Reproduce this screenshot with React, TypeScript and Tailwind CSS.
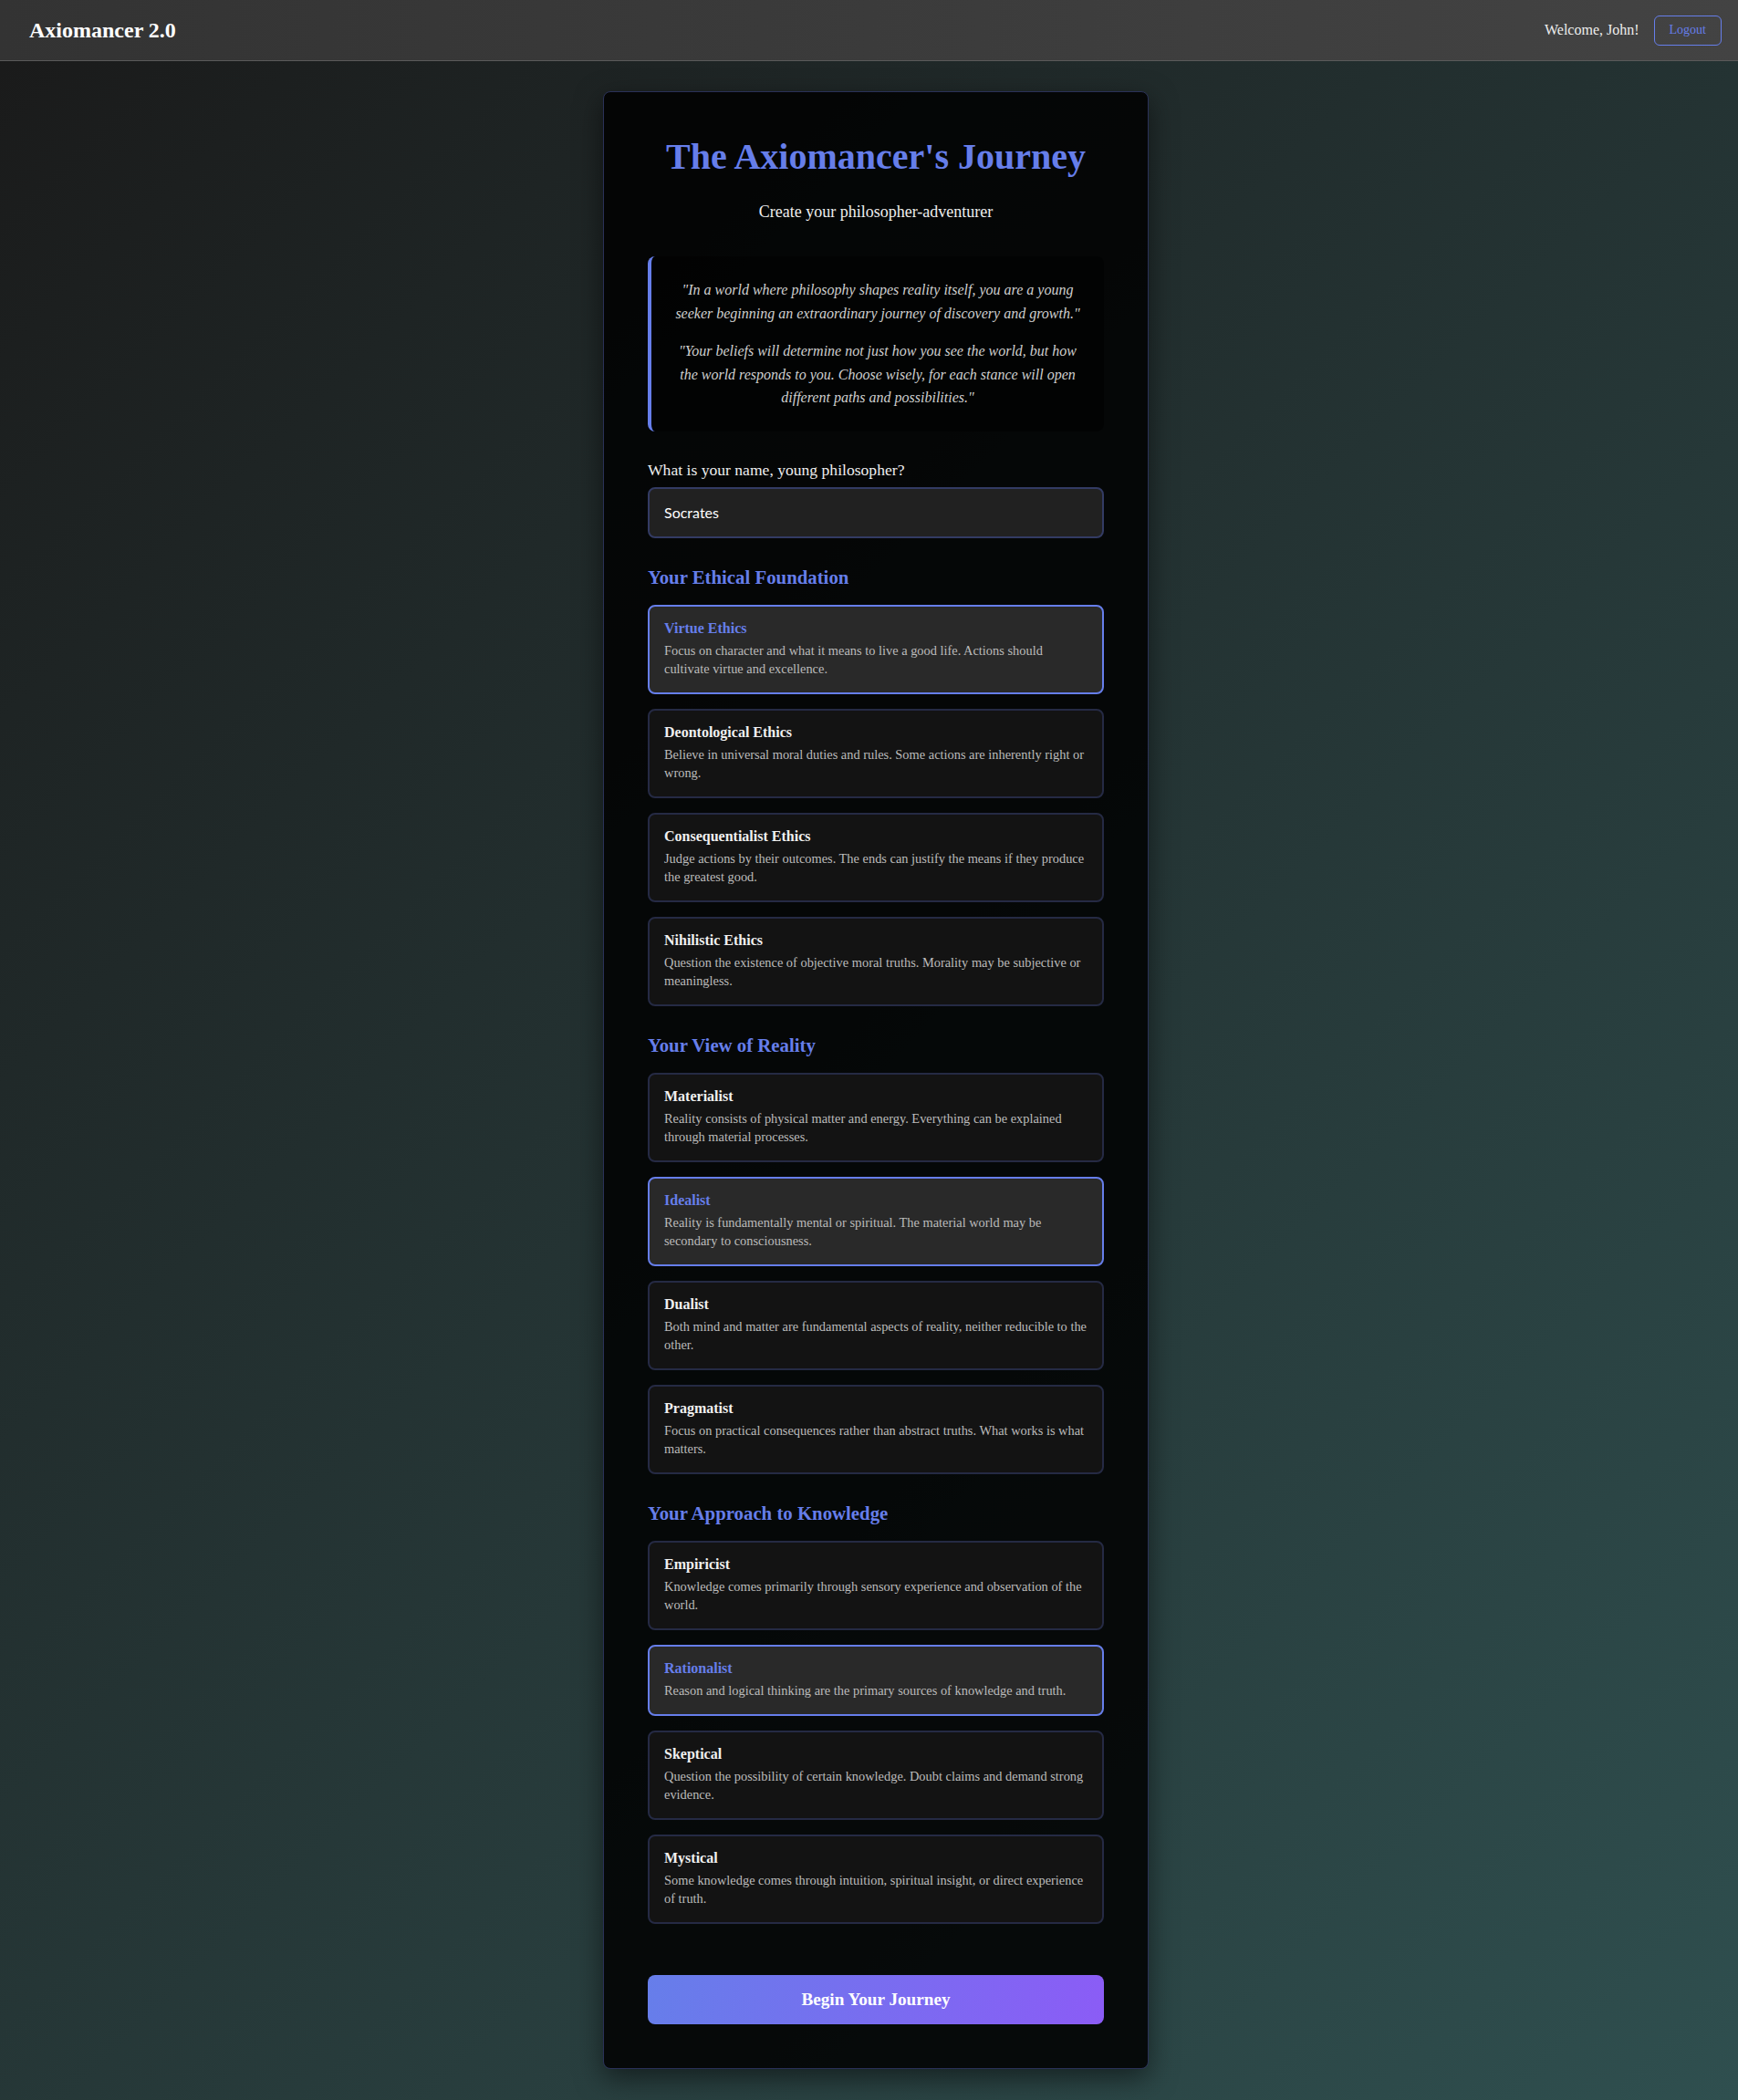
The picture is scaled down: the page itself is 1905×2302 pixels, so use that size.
import React, { useState } from 'react';

interface Stance {
    id: string;
    title: string;
    description: string;
}

const ethics: Stance[] = [
    { id: 'virtue', title: 'Virtue Ethics', description: 'Focus on character and what it means to live a good life. Actions should cultivate virtue and excellence.' },
    { id: 'deontological', title: 'Deontological Ethics', description: 'Believe in universal moral duties and rules. Some actions are inherently right or wrong.' },
    { id: 'consequentialist', title: 'Consequentialist Ethics', description: 'Judge actions by their outcomes. The ends can justify the means if they produce the greatest good.' },
    { id: 'nihilistic', title: 'Nihilistic Ethics', description: 'Question the existence of objective moral truths. Morality may be subjective or meaningless.' },
];

const reality: Stance[] = [
    { id: 'materialist', title: 'Materialist', description: 'Reality consists of physical matter and energy. Everything can be explained through material processes.' },
    { id: 'idealist', title: 'Idealist', description: 'Reality is fundamentally mental or spiritual. The material world may be secondary to consciousness.' },
    { id: 'dualist', title: 'Dualist', description: 'Both mind and matter are fundamental aspects of reality, neither reducible to the other.' },
    { id: 'pragmatist', title: 'Pragmatist', description: 'Focus on practical consequences rather than abstract truths. What works is what matters.' },
];

const knowledge: Stance[] = [
    { id: 'empiricist', title: 'Empiricist', description: 'Knowledge comes primarily through sensory experience and observation of the world.' },
    { id: 'rationalist', title: 'Rationalist', description: 'Reason and logical thinking are the primary sources of knowledge and truth.' },
    { id: 'skeptical', title: 'Skeptical', description: 'Question the possibility of certain knowledge. Doubt claims and demand strong evidence.' },
    { id: 'mystical', title: 'Mystical', description: 'Some knowledge comes through intuition, spiritual insight, or direct experience of truth.' },
];

const StanceSection: React.FC<{
    heading: string;
    options: Stance[];
    selected: string;
    onSelect: (id: string) => void;
}> = ({ heading, options, selected, onSelect }) => (
    <section className="mt-[31px]">
        <h3 className="text-[20.8px] leading-6 font-bold text-[#667eea] mb-[18px]">{heading}</h3>
        <div className="flex flex-col gap-4">
            {options.map((opt) => {
                const active = selected === opt.id;
                return (
                    <div
                        key={opt.id}
                        onClick={() => onSelect(opt.id)}
                        className={
                            active
                                ? 'cursor-pointer rounded-lg border-2 border-[#667eea] bg-[#292929] px-4 pt-[15px] pb-4'
                                : 'cursor-pointer rounded-lg border-2 border-[#252a44] bg-[#131313] px-4 pt-[15px] pb-4'
                        }
                    >
                        <div className={active ? 'text-base leading-[18px] font-bold text-[#667eea] mb-[5px]' : 'text-base leading-[18px] font-bold text-[#f0f0f0] mb-[5px]'}>
                            {opt.title}
                        </div>
                        <p className="text-[14.4px] leading-5 text-[#bbbbbb]">{opt.description}</p>
                    </div>
                );
            })}
        </div>
    </section>
);

export default function App() {
    const [name, setName] = useState('Socrates');
    const [ethic, setEthic] = useState('virtue');
    const [view, setView] = useState('idealist');
    const [know, setKnow] = useState('rationalist');

    return (
        <div className="min-h-screen bg-[linear-gradient(135deg,#1a1a1a_0%,#2f4f4f_100%)] font-['Liberation_Serif',serif] text-[#eee]">
            <header className="h-[67px] flex items-center justify-between pl-8 pr-[18px] border-b border-[#5a5a5a] bg-[linear-gradient(90deg,#333333,#434343)]">
                <h1 className="text-2xl font-bold text-white">Axiomancer 2.0</h1>
                <div className="flex items-center gap-4">
                    <span className="text-base text-[#eee]">Welcome, John!</span>
                    <button className="h-[33px] px-4 rounded-md border border-[#667eea] text-sm text-[#667eea]">Logout</button>
                </div>
            </header>

            <main className="pt-[33px] pb-[33px] pl-[15px]">
                <div className="mx-auto w-[598px] rounded-lg border border-[#2a3158] bg-black/85 p-12 shadow-[0_10px_30px_rgba(0,0,0,0.5)]">
                    <h2 className="text-center text-[40px] leading-[46px] font-bold text-[#667eea] mb-6">The Axiomancer's Journey</h2>
                    <p className="text-center text-[18px] leading-[27px] text-[#eee] mb-[35px]">Create your philosopher-adventurer</p>

                    <div className="rounded-lg border-l-4 border-[#667eea] bg-black/50 p-6 text-center italic text-base leading-[25.6px] text-[#cfcfcf] mb-[30px]">
                        <p className="mb-4">"In a world where philosophy shapes reality itself, you are a young seeker beginning an extraordinary journey of discovery and growth."</p>
                        <p>"Your beliefs will determine not just how you see the world, but how the world responds to you. Choose wisely, for each stance will open different paths and possibilities."</p>
                    </div>

                    <label className="block text-[17.6px] leading-6 text-[#eee] mb-[7px]">What is your name, young philosopher?</label>
                    <input
                        value={name}
                        onChange={(e) => setName(e.target.value)}
                        className="block w-full h-[56px] mb-[3px] rounded-lg border-2 border-[#333b63] bg-[#212121] px-4 font-['Lato',sans-serif] text-base text-white outline-none"
                    />

                    <StanceSection heading="Your Ethical Foundation" options={ethics} selected={ethic} onSelect={setEthic} />
                    <StanceSection heading="Your View of Reality" options={reality} selected={view} onSelect={setView} />
                    <StanceSection heading="Your Approach to Knowledge" options={knowledge} selected={know} onSelect={setKnow} />

                    <button className="mt-[56px] w-full h-[54px] rounded-lg bg-[linear-gradient(100deg,#667eea,#8b5cf6)] text-[19.2px] font-bold text-white">
                        Begin Your Journey
                    </button>
                </div>
            </main>
        </div>
    );
}
